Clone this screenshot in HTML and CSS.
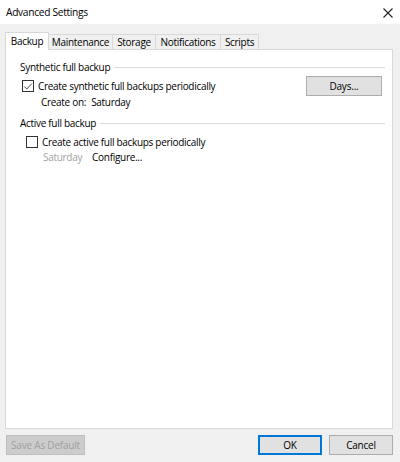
FILE: index.html
```html
<!DOCTYPE html>
<html>
<head>
<meta charset="utf-8">
<link rel="stylesheet" href="styles.css">
</head>
<body>
<div class="window">
  <div class="titlebar">
    <span class="title">Advanced Settings</span>
    <svg class="close" width="10" height="10" viewBox="0 0 10 10"><path d="M0.5 0.5 L9.5 9.5 M9.5 0.5 L0.5 9.5" stroke="#222" stroke-width="1.1" fill="none"/></svg>
  </div>
  <div class="content">
    <div class="tabs">
      <div class="tab active w-backup">Backup</div>
      <div class="tab w-maint">Maintenance</div>
      <div class="tab w-storage">Storage</div>
      <div class="tab w-notif">Notifications</div>
      <div class="tab w-scripts">Scripts</div>
    </div>
    <div class="panel">
      <div class="group">
        <div class="group-head"><span>Synthetic full backup</span><i class="rule"></i></div>
        <div class="row">
          <label class="check synth">
            <span class="box"><svg width="11" height="11" viewBox="0 0 11 11"><path d="M1.5 5.5 L4.2 8.2 L9.5 2.5" stroke="#333" stroke-width="1" fill="none"/></svg></span>
            <span>Create synthetic full backups periodically</span>
          </label>
          <button class="btn days">Days...</button>
        </div>
        <div class="sub synth-sub"><span>Create on:</span><span>Saturday</span></div>
      </div>
      <div class="group">
        <div class="group-head"><span>Active full backup</span><i class="rule"></i></div>
        <label class="check active-check">
          <span class="box"></span>
          <span>Create active full backups periodically</span>
        </label>
        <div class="sub active-sub"><span class="muted">Saturday</span><span>Configure...</span></div>
      </div>
    </div>
    <div class="footer">
      <button class="btn disabled">Save As Default</button>
      <span class="spacer"></span>
      <button class="btn ok">OK</button>
      <button class="btn cancel">Cancel</button>
    </div>
  </div>
</div>
</body>
</html>
```
FILE: styles.css
```css
* { box-sizing: border-box; }
html, body { margin: 0; padding: 0; }
body {
  width: 400px;
  height: 462px;
  background: #f0f0f0;
  font-family: "Open Sans", "Noto Sans", sans-serif;
  font-size: 10px;
  letter-spacing: -0.3px;
  color: #000;
  overflow: hidden;
}
.window { display: flex; flex-direction: column; height: 462px; }
.titlebar {
  height: 24px;
  background: #fff;
  display: flex;
  align-items: center;
  padding: 0 6px 0 6px;
  font-size: 10.2px;
  color: #000;
}
.title { flex: 1; }
.close { margin-right: 1px; margin-top: 1px; }
.content { flex: 1; display: flex; flex-direction: column; padding: 8px 7px 7px 5px; }
.tabs { display: flex; align-items: flex-end; height: 17px; position: relative; z-index: 1; }
.tab {
  height: 15px;
  line-height: 15px;
  text-align: center;
  border: 1px solid #d9d9d9;
  border-left: none;
  border-bottom: none;
  background: #f0f0f0;
  white-space: nowrap;
}
.tab.active {
  height: 18px;
  line-height: 16px;
  margin-bottom: -1px;
  background: #fff;
  border-left: 1px solid #d9d9d9;
}
.w-backup { width: 44px; }
.w-maint { width: 64px; }
.w-storage { width: 43px; }
.w-notif { width: 65px; }
.w-scripts { width: 38px; }
.panel {
  flex: 1;
  background: #fff;
  border: 1px solid #d9d9d9;
  padding: 9px 7px 0 14px;
}
.group-head { display: flex; align-items: center; gap: 4px; height: 16px; }
.rule { flex: 1; height: 1px; background: #dcdcdc; }
.row { display: flex; align-items: center; justify-content: space-between; margin-top: 1px; padding-right: 3px; height: 20px; }
.check { display: flex; align-items: center; gap: 4px; height: 14px; }
.box {
  width: 12px; height: 12px;
  border: 1px solid #333;
  background: #fff;
  display: inline-flex; align-items: center; justify-content: center;
}
.synth { margin-left: 2px; }
.btn {
  font-family: inherit;
  font-size: 10px;
  letter-spacing: -0.2px;
  color: #000;
  background: #e1e1e1;
  border: 1px solid #adadad;
  height: 20px;
  padding: 0;
  line-height: 16px;
  white-space: nowrap;
}
.days { width: 76px; }
.sub { display: flex; gap: 5px; height: 14px; align-items: center; }
.synth-sub { margin-left: 21px; margin-top: -1px; }
.group + .group { margin-top: 6px; }
.active-check { margin-left: 6px; margin-top: 4px; }
.active-sub { margin-left: 23px; height: 16px; gap: 10px; }
.muted { color: #a3a3a3; }
.footer { display: flex; align-items: center; margin-top: 6px; padding-left: 1px; }
.spacer { flex: 1; }
.btn.disabled { width: 79px; background: #cccccc; border-color: #bfbfbf; color: #a0a0a0; }
.btn.ok { width: 64px; border: 2px solid #0078d7; margin-right: 7px; }
.btn.cancel { width: 64px; }
```
